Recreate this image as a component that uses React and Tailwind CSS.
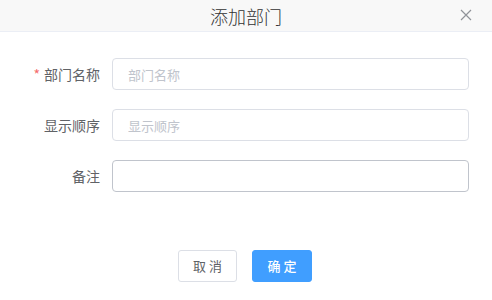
import React from 'react';

const fontStack = { fontFamily: '"Noto Sans CJK SC", "Noto Sans", sans-serif' };

const FormRow = ({ label, required, placeholder, hovered }) => (
  <div className="flex items-center h-[32px]">
    <label className="w-[112px] pr-[12px] text-right text-[14px] text-[#606266] shrink-0">
      {required && <span className="text-[#f56c6c] mr-[4px]">*</span>}
      {label}
    </label>
    <input
      className={`flex-1 h-[32px] rounded-[4px] border bg-white px-[15px] text-[13px] text-[#606266] outline-none placeholder:text-[#c0c4cc] ${
        hovered ? 'border-[#c0c4cc]' : 'border-[#dcdfe6]'
      }`}
      placeholder={placeholder}
    />
  </div>
);

export default function App() {
  return (
    <div className="w-[492px] h-[300px] bg-white overflow-hidden" style={fontStack}>
      {/* Header */}
      <div className="relative h-[32px] bg-[#f8f8f8] border-b border-[#ebeef5] flex items-center justify-center">
        <span className="text-[18px] font-light text-[#333333] leading-none">添加部门</span>
        <svg
          className="absolute right-[20px] top-[9px]"
          width="12"
          height="12"
          viewBox="0 0 12 12"
          fill="none"
          stroke="#909399"
          strokeWidth="1.2"
        >
          <path d="M1 1 L11 11 M11 1 L1 11" />
        </svg>
      </div>

      {/* Form */}
      <div className="flex flex-col gap-[19px] pt-[26px] pr-[23px]">
        <FormRow label="部门名称" required placeholder="部门名称" />
        <FormRow label="显示顺序" placeholder="显示顺序" />
        <FormRow label="备注" hovered />
      </div>

      {/* Footer */}
      <div className="flex justify-center gap-[15px] pt-[58px] pr-[2px]">
        <button className="w-[59px] h-[32px] rounded-[3px] border border-[#dcdfe6] bg-white text-[13px] text-[#606266]">
          取 消
        </button>
        <button className="w-[60px] h-[32px] rounded-[3px] border border-[#409eff] bg-[#409eff] text-[13px] font-medium text-white">
          确 定
        </button>
      </div>
    </div>
  );
}
